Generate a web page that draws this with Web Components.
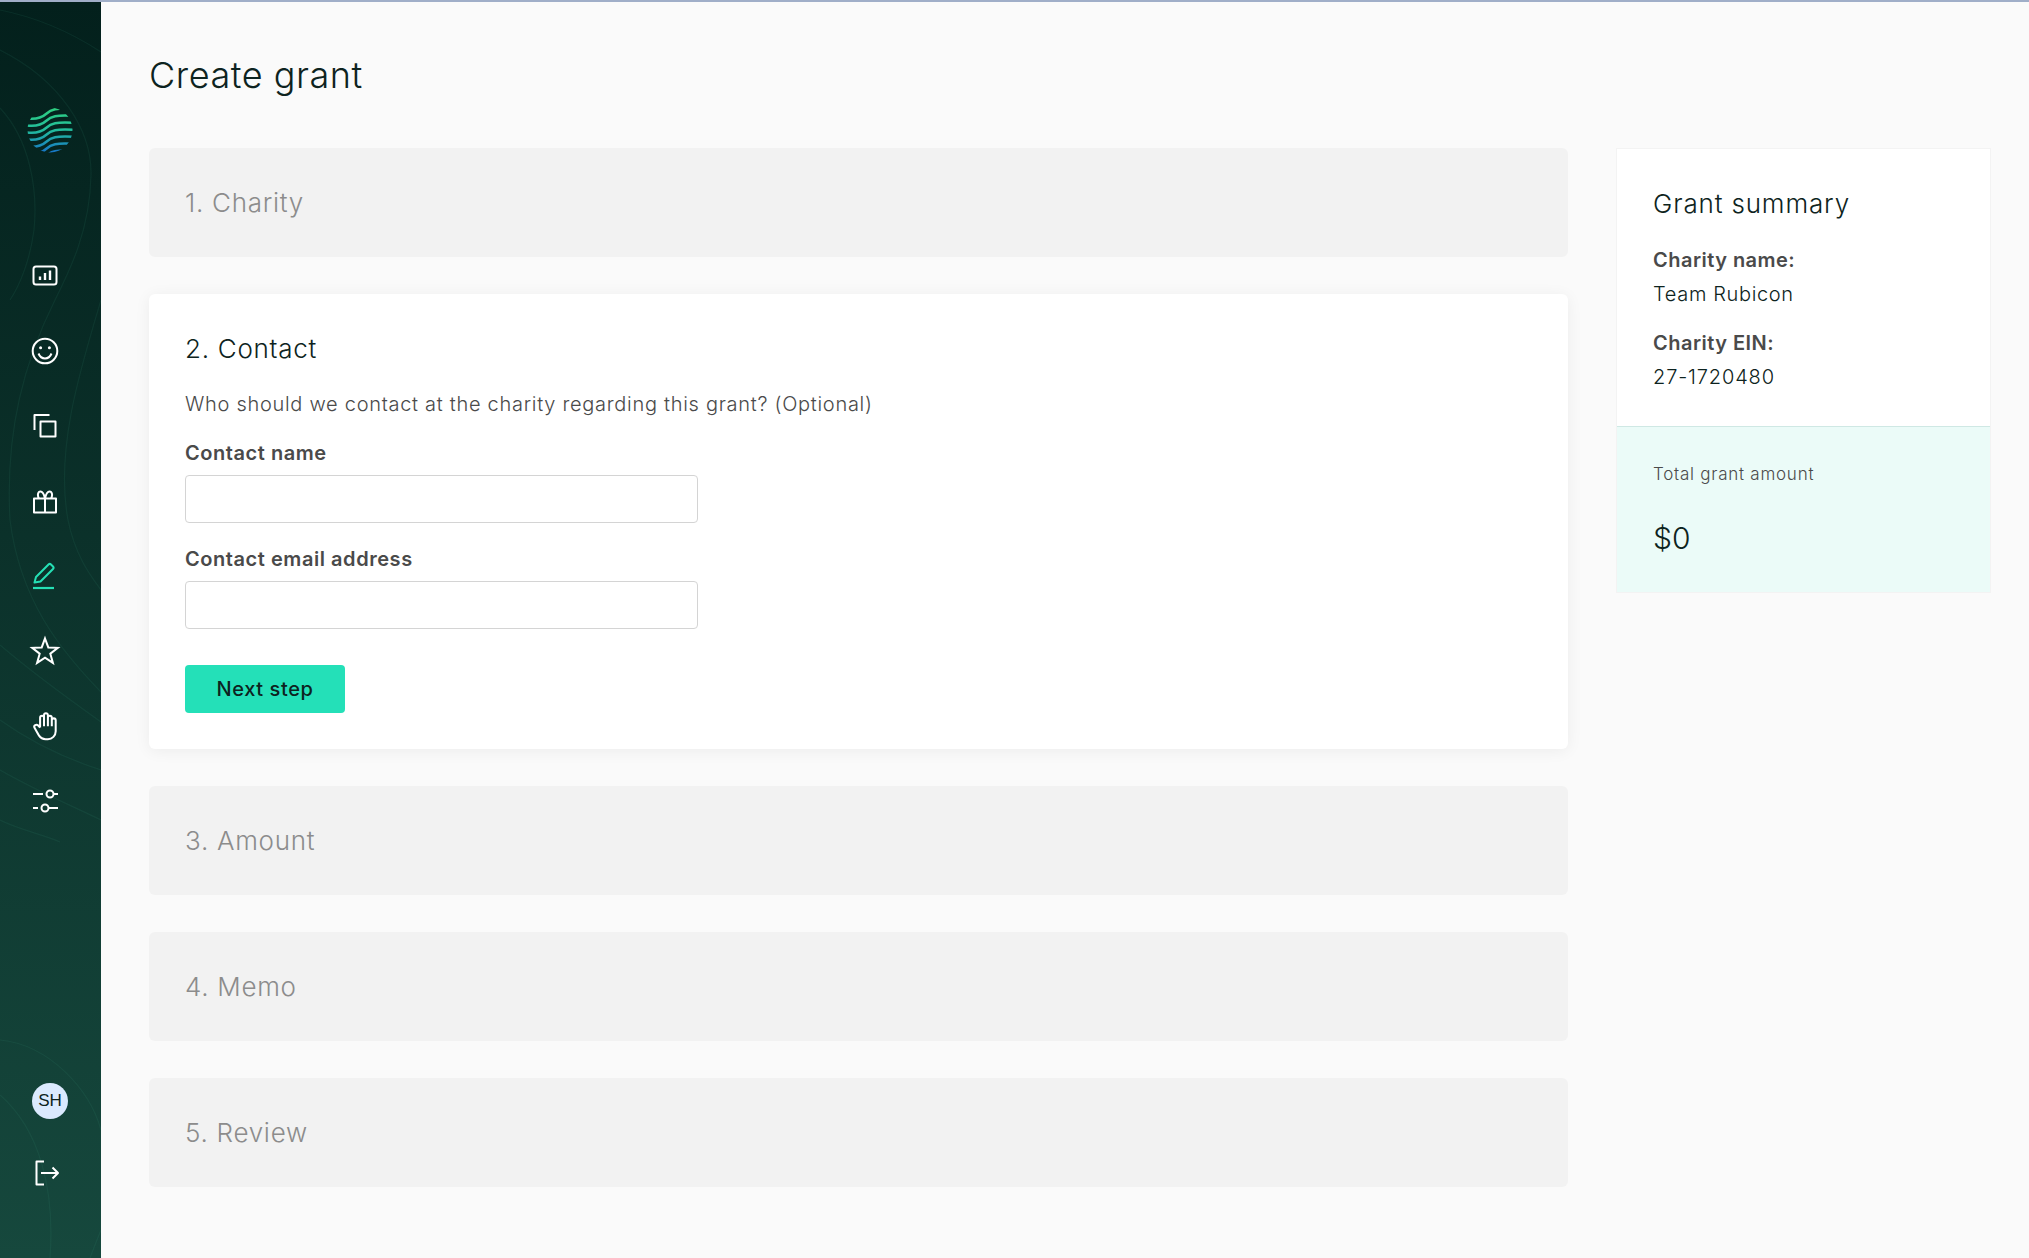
<!DOCTYPE html>
<html>
<head>
<meta charset="utf-8">
<title>Create grant</title>
<style>
  html, body { margin: 0; padding: 0; height: 100%; }
  body { font-family: Inter, "Noto Sans", sans-serif; background: #fafafa; color: #0d2320; }
</style>
</head>
<body>
<grant-page>
  <side-nav slot="nav"></side-nav>
  <h-title slot="title">Create grant</h-title>
  <step-card slot="steps" label="1. Charity"></step-card>
  <step-card slot="steps" label="2. Contact" open>
    <p-text>Who should we contact at the charity regarding this grant? (Optional)</p-text>
    <form-field label="Contact name"></form-field>
    <form-field label="Contact email address"></form-field>
    <next-button>Next step</next-button>
  </step-card>
  <step-card slot="steps" label="3. Amount"></step-card>
  <step-card slot="steps" label="4. Memo"></step-card>
  <step-card slot="steps" label="5. Review"></step-card>
  <grant-summary slot="aside"></grant-summary>
</grant-page>

<script>
const icons = {
  chart: '<rect x="2.5" y="4.5" width="23" height="18" rx="2.5" stroke-width="2"/><path d="M9 18v-3.5M14 18v-7M19 18V8.5" stroke-width="2.4"/>',
  smile: '<circle cx="14" cy="14" r="12.3"/><circle cx="9.6" cy="10.8" r="1.5" fill="#fff" stroke="none"/><circle cx="18.4" cy="10.8" r="1.5" fill="#fff" stroke="none"/><path d="M7.5 16.5c1.3 3.2 3.8 5 6.5 5s5.200-1.800 6.500-5"/>',
  copy: '<path d="M18.500 3H3.500v15"/><rect x="9.500" y="9.500" width="15" height="15"/>',
  gift: '<path d="M3 11.500h22v14H3zM14 11.500v14M14 11.500c-1-4.500-2.500-7-4.500-7-2.500 0-3.500 3.500-1.500 7M14 11.500c1-4.500 2.500-7 4.500-7 2.500 0 3.500 3.500 1.500 7"/>',
  pen: '<path d="M3.500 20.500l1.500-5.500L17.500 2.500a1.800 1.800 0 0 1 2.500 0l2 2a1.800 1.800 0 0 1 0 2.500L9.500 19.500z" stroke="#25e0b5"/><path d="M2 26h21" stroke="#25e0b5" stroke-width="2.200"/>',
  star: '<path stroke-linejoin="miter" d="M14 1.500l3.300 8.970 9.500.330-7.470 5.930 2.570 9.170-7.900-5.300-7.900 5.300 2.570-9.170L1.200 10.800l9.500-.330z"/>',
  hand: '<g transform="scale(1.300) translate(-1 -1.100)" stroke-width="1.550"><path d="M8 13V5.500a1.500 1.500 0 0 1 3 0V12M11 5.500v-2a1.500 1.500 0 1 1 3 0V12M14 5.500a1.500 1.500 0 0 1 3 0V12M17 7.500a1.500 1.500 0 0 1 3 0V16a6 6 0 0 1-6 6h-2 .208a6 6 0 0 1-5.012-2.700L7 19c-.312-.479-1.407-2.388-3.286-5.728a1.500 1.500 0 0 1 .536-2.022 1.867 1.867 0 0 1 2.280.280L8 13"/></g>',
  sliders: '<circle cx="19" cy="7" r="3.500"/><circle cx="14" cy="21" r="3.500"/><path d="M2 7h10M23 7h4M2 21h5M18 21h9"/>',
  logout: '<path d="M11 2.500H3.500v23H11M8 14h17M19.500 8.500L25 14l-5.500 5.500"/>'
};

class NavIcon extends HTMLElement {
  constructor() {
    super();
    this.attachShadow({ mode: 'open' }).innerHTML = `
      <style>
        :host { display: flex; width: 28px; height: 28px; }
        svg { width: 28px; height: 28px; fill: none; stroke: #fff; stroke-width: 2; stroke-linejoin: round; overflow: visible; }
      </style>
      <svg viewBox="0 0 28 28">${icons[this.getAttribute('name')] || ''}</svg>`;
  }
}
customElements.define('nav-icon', NavIcon);

class SideNav extends HTMLElement {
  constructor() {
    super();
    let waves = '';
    for (let i = 0; i < 8; i++) {
      const y = 108 + i * 7;
      waves += `<path d="M24 ${y + 10}c11 2 17 .5 22-4s9-6.500 31-5"/>`;
    }
    const names = ['chart', 'smile', 'copy', 'gift', 'pen', 'star', 'hand', 'sliders'];
    this.attachShadow({ mode: 'open' }).innerHTML = `
      <style>
        :host {
          display: flex; flex-direction: column; position: relative; overflow: hidden;
          width: 101px; box-sizing: border-box; flex: none;
          background: linear-gradient(180deg, #03201c 0%, #16483d 100%);
          padding: 105px 0 71px 31px;
        }
        .arcs { position: absolute; left: 0; top: -2px; width: 101px; height: 1258px; fill: none; stroke: rgba(70,170,140,.1); stroke-width: 1.200; }
        .logo { position: relative; width: 46px; height: 46px; margin-bottom: 109px; margin-left: -4px; }
        .logo svg { display: block; width: 46px; height: 46px; }
        nav { position: relative; display: flex; flex-direction: column; gap: 47px; }
        .foot { position: relative; margin-top: auto; display: flex; flex-direction: column; gap: 40px; }
        .av {
          width: 36px; height: 36px; border-radius: 50%; background: #dbeafe; color: #0d2320;
          display: flex; align-items: center; justify-content: center; margin-left: 1px;
          font: 17px "Liberation Sans", Arial, sans-serif;
        }
        .foot nav-icon { margin-left: 2px; }
      </style>
      <svg class="arcs" viewBox="0 0 101 1258">
        <path d="M0 10C40 18 75 35 101 52"/>
        <path d="M0 50C60 80 92 130 91 175C90 230 70 270 55 300C25 360 5 430 10 520C20 600 60 650 101 692"/>
        <path d="M0 108C30 140 38 190 34 230C30 260 20 285 10 300"/>
        <path d="M101 300C80 370 55 450 68 520C75 555 90 575 101 590"/>
        <path d="M0 645C35 675 70 700 101 722"/>
        <path d="M0 720C35 745 70 760 101 770"/>
        <path d="M0 770C35 790 70 805 101 820"/>
        <path d="M0 820C20 830 45 835 60 842"/>
        <path d="M0 1040C50 1045 90 1090 101 1130"/>
        <path d="M0 1095C40 1130 55 1190 50 1258"/>
        <path d="M101 1230C97 1240 93 1250 90 1258"/>
      </svg>
      <div class="logo">
        <svg viewBox="27 107 46 46">
          <defs>
            <linearGradient id="g" gradientUnits="userSpaceOnUse" x1="0" y1="107" x2="0" y2="153">
              <stop offset="0" stop-color="#2fd07f"/>
              <stop offset=".5" stop-color="#22bd9c"/>
              <stop offset="1" stop-color="#1673c8"/>
            </linearGradient>
            <clipPath id="c"><circle cx="50" cy="130" r="22.500"/></clipPath>
          </defs>
          <g clip-path="url(#c)" fill="none" stroke="url(#g)" stroke-width="2.500">${waves}</g>
        </svg>
      </div>
      <nav>${names.map(n => `<nav-icon name="${n}"></nav-icon>`).join('')}</nav>
      <div class="foot">
        <div class="av">SH</div>
        <nav-icon name="logout"></nav-icon>
      </div>`;
  }
}
customElements.define('side-nav', SideNav);

class HTitle extends HTMLElement {
  constructor() {
    super();
    this.attachShadow({ mode: 'open' }).innerHTML = `
      <style>
        :host { display: block; font-size: 36px; font-weight: 300; line-height: 44px; letter-spacing: .54px; color: #0d2320; }
      </style><slot></slot>`;
  }
}
customElements.define('h-title', HTitle);

class StepCard extends HTMLElement {
  constructor() {
    super();
    this.attachShadow({ mode: 'open' }).innerHTML = `
      <style>
        :host {
          display: block; box-sizing: border-box; padding: 36px; border-radius: 6px;
          background: #f2f2f2; color: #8c8c8c; height: 109px;
        }
        :host([open]) {
          background: #fff; color: #0d2320; height: auto;
          box-shadow: 0 2px 16px rgba(0,0,0,.06);
        }
        h2 { margin: 0; font-size: 26px; font-weight: 350; line-height: 37px; letter-spacing: .72px; }
        .body { display: flex; flex-direction: column; margin-top: -1px; }
      </style>
      <h2>${this.getAttribute('label')}</h2>
      <div class="body"><slot></slot></div>`;
  }
}
customElements.define('step-card', StepCard);

class PText extends HTMLElement {
  constructor() {
    super();
    this.attachShadow({ mode: 'open' }).innerHTML = `
      <style>
        :host { display: block; font-size: 20px; font-weight: 350; line-height: 30px; letter-spacing: .71px; color: #4a4a4a; margin-top: 23px; }
      </style><slot></slot>`;
  }
}
customElements.define('p-text', PText);

class FormField extends HTMLElement {
  constructor() {
    super();
    this.attachShadow({ mode: 'open' }).innerHTML = `
      <style>
        :host { display: block; margin-top: 19px; }
        :host(:last-of-type) { margin-top: 21px; }
        label { display: block; font-size: 20px; font-weight: 600; line-height: 30px; letter-spacing: .55px; color: #4a4a4a; margin-bottom: 7px; }
        input {
          display: block; box-sizing: border-box; width: 513px; height: 48px; padding: 0 16px;
          background: #fff; border: 1px solid #d4d4d4; border-radius: 4px; outline: none;
        }
      </style>
      <label>${this.getAttribute('label')}</label>
      <input type="text">`;
  }
}
customElements.define('form-field', FormField);

class NextButton extends HTMLElement {
  constructor() {
    super();
    this.attachShadow({ mode: 'open' }).innerHTML = `
      <style>
        :host { display: block; margin-top: 36px; }
        button {
          display: block; width: 160px; height: 48px; border: 0; border-radius: 4px; background: #24e0b8;
          color: #0d2320; font: 500 20px Inter, sans-serif; letter-spacing: .6px;
        }
      </style>
      <button><slot></slot></button>`;
  }
}
customElements.define('next-button', NextButton);

class GrantSummary extends HTMLElement {
  constructor() {
    super();
    this.attachShadow({ mode: 'open' }).innerHTML = `
      <style>
        :host { display: block; width: 375px; box-sizing: border-box; border: 1px solid #f3f3f3; background: #fff; }
        .top { padding: 36px 36px 24px; height: 278px; box-sizing: border-box; border-bottom: 1px solid #cfe8e4; }
        h3 { margin: 0; font-size: 26px; font-weight: 350; line-height: 37px; letter-spacing: .85px; color: #0d2320; }
        dl { margin: 0; }
        dt { font-size: 20px; font-weight: 600; line-height: 34px; letter-spacing: .47px; color: #4a4a4a; margin-top: 15px; }
        dd { margin: 0; font-size: 20px; font-weight: 350; line-height: 34px; letter-spacing: .65px; color: #0d2320; }
        dd.num { letter-spacing: .85px; }
        dt:first-child { margin-top: 21px; }
        .total { background: #ebfbf8; padding: 33px 36px 0; height: 165px; box-sizing: border-box; }
        .lbl { font-size: 17px; font-weight: 350; line-height: 28px; letter-spacing: .75px; color: #4a4a4a; }
        .amt { font-size: 30px; font-weight: 350; line-height: 40px; margin-top: 30px; color: #0d2320; }
      </style>
      <div class="top">
        <h3>Grant summary</h3>
        <dl>
          <dt>Charity name:</dt><dd>Team Rubicon</dd>
          <dt>Charity EIN:</dt><dd class="num">27-1720480</dd>
        </dl>
      </div>
      <div class="total">
        <div class="lbl">Total grant amount</div>
        <div class="amt">$0</div>
      </div>`;
  }
}
customElements.define('grant-summary', GrantSummary);

class GrantPage extends HTMLElement {
  constructor() {
    super();
    this.attachShadow({ mode: 'open' }).innerHTML = `
      <style>
        :host { display: flex; flex-direction: column; height: 100vh; overflow: hidden; }
        .bar { height: 2px; flex: none; background: #a0aec8; }
        .shell { flex: 1; display: flex; min-height: 0; }
        ::slotted(side-nav) { align-self: stretch; }
        main { flex: 1; padding: 51px 38px 0 48px; min-width: 0; }
        .grid { display: grid; grid-template-columns: 1419px 375px; column-gap: 48px; margin-top: 51px; }
        .steps { display: flex; flex-direction: column; gap: 37px; }
      </style>
      <div class="bar"></div>
      <div class="shell">
        <slot name="nav"></slot>
        <main>
          <slot name="title"></slot>
          <div class="grid">
            <div class="steps"><slot name="steps"></slot></div>
            <div><slot name="aside"></slot></div>
          </div>
        </main>
      </div>`;
  }
}
customElements.define('grant-page', GrantPage);
</script>
</body>
</html>
